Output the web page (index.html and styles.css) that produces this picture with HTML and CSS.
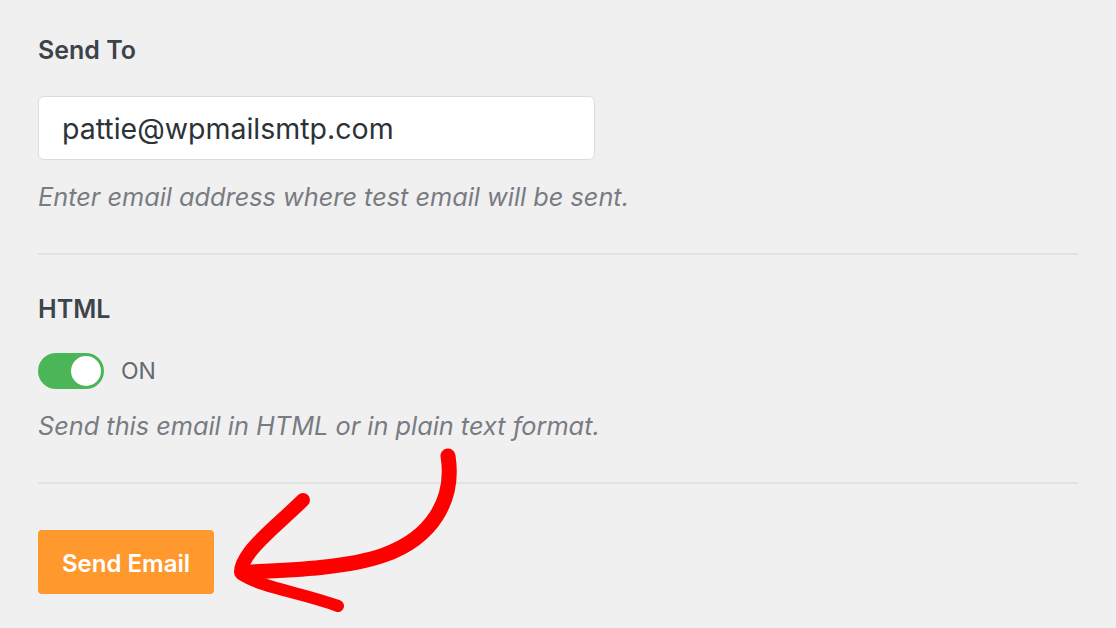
FILE: index.html
```html
<!DOCTYPE html>
<html lang="en">
<head>
  <meta charset="UTF-8">
  <title>Send a Test Email</title>
  <link rel="stylesheet" href="styles.css">
</head>
<body>
  <div id="container">
    <div class="field">
      <label class="field-label" for="sendTo">Send To</label>
      <input type="text" id="sendTo" class="text-input" value="pattie@wpmailsmtp.com">
      <p class="desc">Enter email address where test email will be sent.</p>
    </div>

    <div class="field">
      <div class="field-label">HTML</div>
      <div class="toggle-row">
        <span class="toggle"><span class="knob"></span></span>
        <span class="toggle-text">ON</span>
      </div>
      <p class="desc">Send this email in HTML or in plain text format.</p>
    </div>

    <div class="field last">
      <button class="send-btn">Send Email</button>
    </div>

    <!-- hand drawn arrow pointing at the button -->
    <svg class="arrow" width="1116" height="628" viewBox="0 0 1116 628">
      <g fill="none" stroke="#ff0000" stroke-linecap="round" stroke-linejoin="round">
        <path d="M448,456 C455,500 432,538 384,555 C350,567 300,570 248,572" stroke-width="15"/>
        <path d="M303,500 C285,518 262,536 250,552 C244,560 241,566 241,572" stroke-width="14"/>
        <path d="M241,574 C262,588 300,592 338,606" stroke-width="12"/>
      </g>
    </svg>
  </div>
</body>
</html>
```

FILE: styles.css
```css
body {
  margin: 0;
  padding: 0;
  background-color: #f0f0f1;
  font-family: Inter, "Liberation Sans", sans-serif;
  color: #3c434a;
}
#container {
  position: relative;
  width: 1040px;
  height: 628px;
  margin-left: 38px;
}
.field {
  padding: 35px 0 41px;
  border-bottom: 2px solid #e2e2e3;
}
.field + .field {
  padding-top: 39px;
}
.field.last {
  border-bottom: none;
  padding-top: 46px;
}
.field-label {
  display: block;
  font-size: 25px;
  font-weight: 600;
  line-height: 30px;
  color: #3c434a;
  margin-bottom: 31px;
}
.text-input {
  display: block;
  box-sizing: border-box;
  width: 557px;
  height: 64px;
  padding: 0 23px;
  border: 1px solid #dcdcde;
  border-radius: 6px;
  background: #fff;
  font-family: Inter, "Liberation Sans", sans-serif;
  font-size: 28.5px;
  color: #2c3338;
}
.desc {
  margin: 22px 0 0;
  font-size: 25.3px;
  font-style: italic;
  line-height: 30px;
  color: #787c82;
}
.toggle-row {
  display: flex;
  align-items: center;
  gap: 17px;
  margin-top: -2px;
}
.toggle {
  display: flex;
  align-items: center;
  justify-content: flex-end;
  box-sizing: border-box;
  width: 66px;
  height: 36px;
  padding: 3px;
  border-radius: 18px;
  background-color: #4ab657;
}
.knob {
  width: 30px;
  height: 30px;
  border-radius: 50%;
  background: #fff;
}
.toggle-text {
  font-size: 23px;
  color: #646970;
}
.send-btn {
  width: 176px;
  height: 64px;
  padding-top: 4px;
  border: none;
  border-radius: 4px;
  background-color: #ff982d;
  color: #fff;
  font-family: Inter, "Liberation Sans", sans-serif;
  font-size: 24px;
  font-weight: 600;
  cursor: pointer;
}
.arrow {
  position: absolute;
  left: -38px;
  top: 0;
  pointer-events: none;
}
```
